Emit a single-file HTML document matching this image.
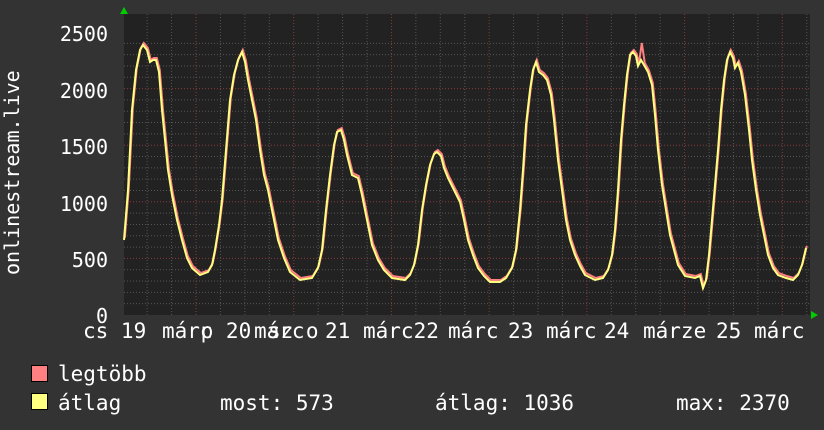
<!DOCTYPE html>
<html><head><meta charset="utf-8"><style>
html,body{margin:0;padding:0;background:#333;}
#c{position:relative;width:824px;height:430px;background:#333;overflow:hidden;font-family:"DejaVu Sans Mono","Liberation Mono",monospace;color:#fff;font-size:21px;}
.t{position:absolute;white-space:pre;line-height:1;}
.yl{position:absolute;right:716px;text-align:right;line-height:1;font-size:20px;}
.sq{position:absolute;width:15px;height:15px;border:1px solid #000;}
</style></head><body><div id="c">
<svg width="824" height="430" style="position:absolute;left:0;top:0">
<rect x="124" y="14" width="686" height="301" fill="#222"/>
<g id="grid"></g>
<polygon points="120,14 128,14 124,7" fill="#0c0"/>
<polygon points="811,311 811,319 818,315" fill="#0c0"/>
<polyline id="pk" fill="none" stroke="#ff8080" stroke-width="2"/>
<polyline id="yl" fill="none" stroke="#ffff80" stroke-width="2"/>
</svg>
<div class="yl" style="top:24px">2500</div>
<div class="yl" style="top:81px">2000</div>
<div class="yl" style="top:137px">1500</div>
<div class="yl" style="top:194px">1000</div>
<div class="yl" style="top:250px">500</div>
<div class="yl" style="top:306px">0</div>
<div class="t" style="left:2px;top:275px;transform:rotate(-90deg);transform-origin:0 0;font-size:20px">onlinestream.live</div>
<div class="t" style="left:83px;top:321px">cs 19</div>
<div class="t" style="left:162px;top:321px">márc</div>
<div class="t" style="left:188px;top:321px"> p 20</div>
<div class="t" style="left:254px;top:321px">márc</div>
<div class="t" style="left:268px;top:321px">sz o</div>
<div class="t" style="left:325px;top:321px">21</div>
<div class="t" style="left:363px;top:321px">márc22</div>
<div class="t" style="left:448px;top:321px">márc</div>
<div class="t" style="left:508px;top:321px">23</div>
<div class="t" style="left:546px;top:321px">márc</div>
<div class="t" style="left:604px;top:321px">24</div>
<div class="t" style="left:643px;top:321px">márze</div>
<div class="t" style="left:716px;top:321px">25</div>
<div class="t" style="left:754px;top:321px">márc</div>
<div class="sq" style="left:31px;top:365px;background:#ff8080"></div>
<div class="sq" style="left:31px;top:393px;background:#ffff80"></div>
<div class="t" style="left:58px;top:364px">legtöbb</div>
<div class="t" style="left:58px;top:393px">átlag</div>
<div class="t" style="left:220px;top:393px">most: 573</div>
<div class="t" style="left:435px;top:393px">átlag: 1036</div>
<div class="t" style="left:676px;top:393px">max: 2370</div>
</div>
<script>
var g=document.getElementById('grid'),s='';
for(var i=1;i<25;i++){var y=315-i*11.32;var r=i%5==0;s+='<line x1="124" x2="810" y1="'+y+'" y2="'+y+'" stroke="'+(r?'#8a3a3a':'#555')+'" stroke-dasharray="1,2"/>';}
for(var k=-3;k<28;k++){var x=196+k*24.43;if(x<=124||x>=810)continue;var r=k%4==0;s+='<line y1="14" y2="315" x1="'+x+'" x2="'+x+'" stroke="'+(r?'#8a3a3a':'#555')+'" stroke-dasharray="1,2"/>';}
g.innerHTML=s;
var p="124,240 128,190 132,110 136,70 140,50 143,45 147,50 150,62 153,60 156,60 159,72 162,110 165,140 168,170 172,195 177,220 182,240 187,258 192,268 200,275 208,272 212,265 215,250 219,225 222,200 226,150 230,100 234,75 238,60 242,52 245,62 248,80 252,100 256,120 260,150 264,175 268,190 273,215 278,240 284,258 290,272 300,280 312,278 318,268 322,250 326,210 330,175 334,145 337,132 341,130 344,140 347,155 352,175 358,178 362,195 366,215 372,245 378,260 384,270 392,278 405,280 410,275 414,265 418,245 422,210 426,185 430,165 434,154 437,152 441,156 444,168 448,178 454,190 460,202 464,220 468,240 473,255 478,268 484,276 490,282 500,282 506,278 512,268 516,250 520,210 523,170 526,125 530,90 533,70 536,62 539,72 543,75 547,80 551,95 554,120 558,160 562,190 566,220 570,240 575,255 580,266 585,275 595,280 603,278 608,270 612,255 615,230 618,190 621,140 624,105 627,75 630,55 633,52 636,56 638,66 641,60 644,65 648,72 652,85 655,115 658,150 662,185 666,210 670,235 674,250 678,265 685,276 695,278 700,276 703,288 706,280 709,255 712,220 715,185 718,150 721,110 724,80 727,60 730,52 733,58 735,68 738,63 741,72 745,95 749,130 752,160 756,190 760,215 764,235 768,255 773,268 778,275 786,278 793,280 798,275 802,265 806,248";
document.getElementById('yl').setAttribute('points',p);
var q=p.split(' ').map(function(a){var b=a.split(',');var x=+b[0],y=+b[1]-2;if(x==641)y=43;return (x+0.8)+','+y;}).join(' ');
document.getElementById('pk').setAttribute('points',q);
</script>
</body></html>
